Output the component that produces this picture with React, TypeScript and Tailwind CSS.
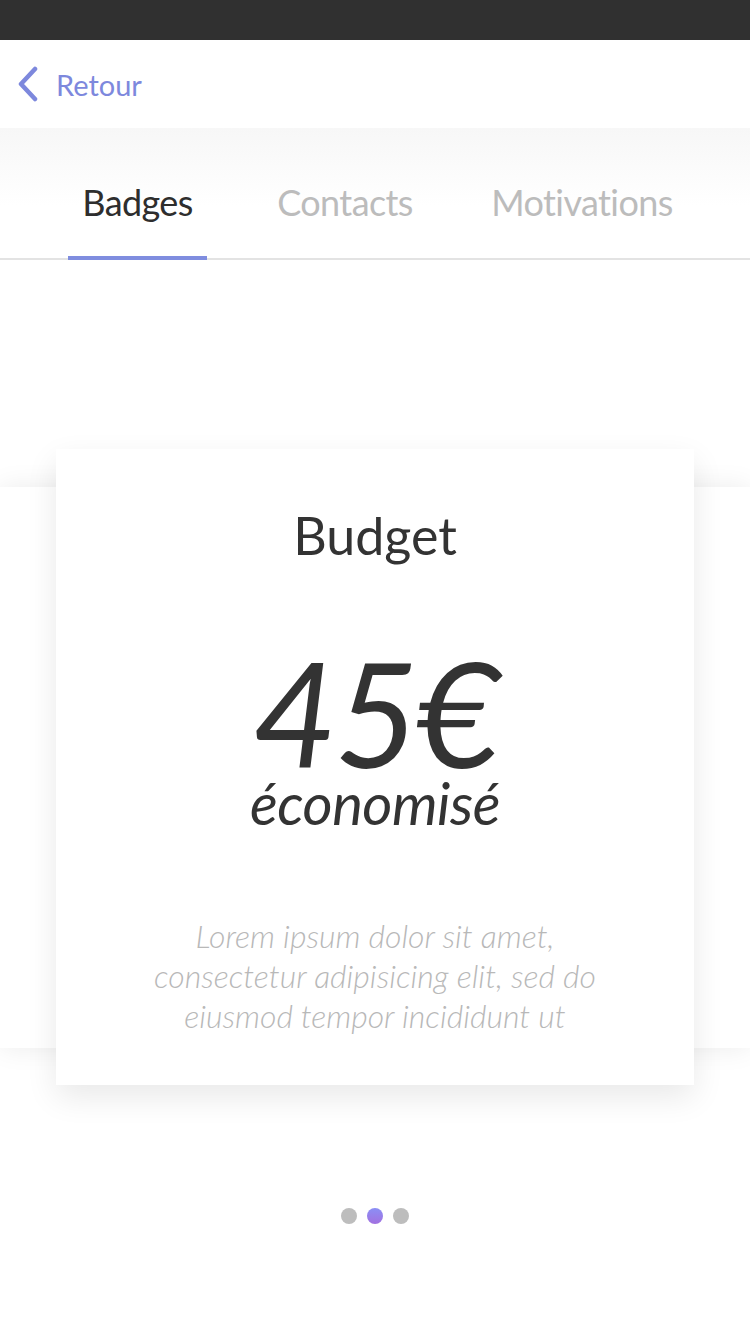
import React, { useState } from 'react';

const tabs = ['Badges', 'Contacts', 'Motivations'];

const App: React.FC = () => {
  const [active, setActive] = useState<number>(0);
  const [slide, setSlide] = useState<number>(1);

  return (
    <div className="w-[750px] min-h-[1334px] bg-white font-['Lato','Noto_Sans',sans-serif] overflow-hidden">
      {/* status bar */}
      <div className="h-[40px] bg-[#303030]" />

      {/* header */}
      <header className="h-[88px] flex items-center pl-[16px] bg-white relative z-10">
        <button className="flex items-center gap-[16px] text-[#7d88dd]">
          <svg width="24" height="36" viewBox="0 0 24 36" fill="none">
            <path d="M19 3 L5 18 L19 33" stroke="currentColor" strokeWidth="4.5" strokeLinecap="round" strokeLinejoin="round" />
          </svg>
          <span className="text-[29px] leading-none">Retour</span>
        </button>
      </header>

      {/* tabs */}
      <nav className="h-[132px] bg-gradient-to-b from-[#f7f7f7] to-white to-60% border-b-2 border-[#e3e3e3] flex items-end">
        <div className="flex w-full">
          {tabs.map((t, i) => (
            <button
              key={t}
              onClick={() => setActive(i)}
              className={`h-[76px] flex items-center justify-center text-[36px] leading-none tracking-[-0.6px] relative ${
                i === 0 ? 'ml-[68px] w-[139px]' : i === 1 ? 'ml-[63px] w-[150px]' : 'ml-[66px] w-[192px]'
              } ${active === i ? 'text-[#2e2e2e]' : 'text-[#bcbcbc]'}`}
            >
              <span className="-mt-[36px] whitespace-nowrap">{t}</span>
              {active === i && <span className="absolute left-0 right-0 -bottom-[2px] h-[4px] bg-[#7f8ddf]" />}
            </button>
          ))}
        </div>
      </nav>

      {/* carousel */}
      <div className="relative mt-[189px]">
        <div className="absolute left-0 right-0 top-[38px] h-[561px] bg-white shadow-[0_0_26px_rgba(0,0,0,0.08)]" />
        <div className="relative mx-[56px] h-[636px] bg-white shadow-[0_12px_30px_rgba(0,0,0,0.09)] flex flex-col items-center">
          <h2 className="mt-[60px] text-[52px] leading-none text-[#333] font-normal">Budget</h2>
          <div className="mt-[86px] text-[146px] leading-[130px] italic font-normal text-[#333] tracking-[-3px]">45€</div>
          <div className="text-[58px] leading-[52px] italic font-normal text-[#333] tracking-[-0.5px]">économisé</div>
          <p className="mt-[87px] text-center text-[32px] leading-[40px] italic font-light text-[#b8b8b8]">
            Lorem ipsum dolor sit amet,
            <br />
            consectetur adipisicing elit, sed do
            <br />
            eiusmod tempor incididunt ut
          </p>
        </div>
      </div>

      {/* dots */}
      <div className="flex justify-center gap-[10px] mt-[123px]">
        {[0, 1, 2].map((d) => (
          <button
            key={d}
            onClick={() => setSlide(d)}
            className={`w-[16px] h-[16px] rounded-full ${
              slide === d ? 'bg-gradient-to-b from-[#8a8ff5] to-[#a170e0]' : 'bg-[#bdbdbd]'
            }`}
          />
        ))}
      </div>
    </div>
  );
};

export default App;
